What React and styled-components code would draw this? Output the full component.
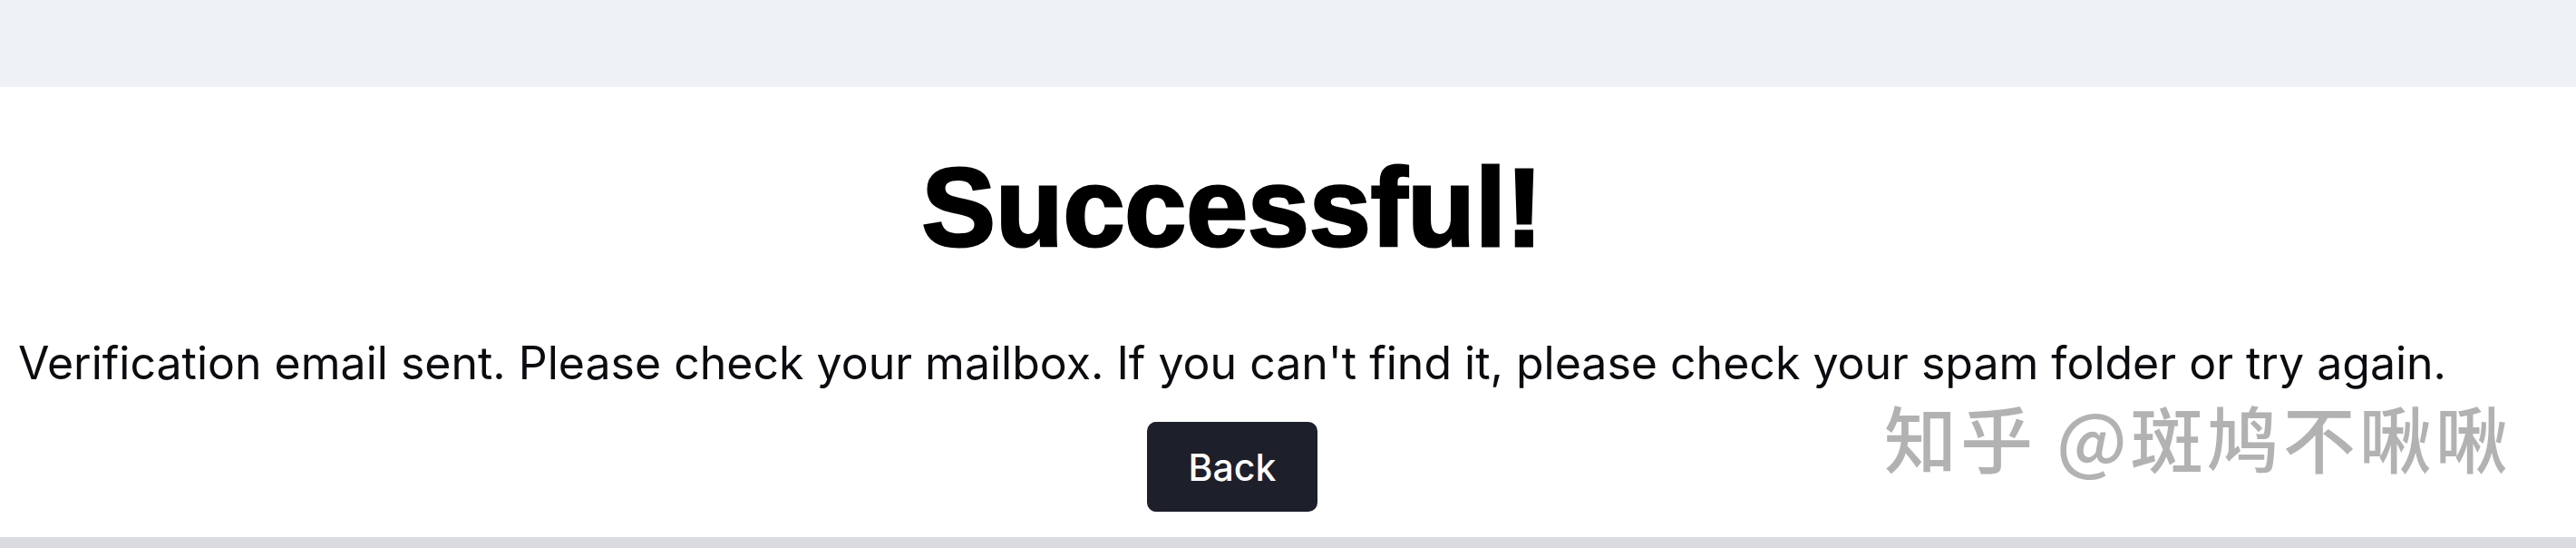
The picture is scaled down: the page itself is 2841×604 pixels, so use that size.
import React from 'react';
import styled, { createGlobalStyle } from 'styled-components';

const GlobalStyle = createGlobalStyle`
  html, body {
    margin: 0;
    padding: 0;
    background: #ffffff;
  }
  #root {
    width: 2841px;
    height: 604px;
    overflow: hidden;
  }
`;

const Page = styled.div`
  width: 100%;
  height: 604px;
  display: flex;
  flex-direction: column;
  position: relative;
`;

const TopBar = styled.div`
  height: 96px;
  background-color: #eef1f6;
  flex-shrink: 0;
`;

const Main = styled.main`
  flex: 1;
  display: flex;
  flex-direction: column;
  align-items: center;
  padding-right: 123px;
  background-color: #ffffff;
`;

const Title = styled.h1`
  margin: 72px 0 0;
  font-family: "Liberation Sans", Arial, sans-serif;
  font-weight: 700;
  font-size: 122px;
  line-height: 1;
  color: #000000;
  -webkit-text-stroke: 3px #000000;
`;

const Message = styled.p`
  margin: 85px 0 0;
  font-family: Inter, "Noto Sans", sans-serif;
  font-size: 50px;
  line-height: 1;
  color: #0b0b10;
  white-space: nowrap;
`;

const BackButton = styled.button`
  margin-top: 40px;
  width: 188px;
  height: 99px;
  border: none;
  border-radius: 10px;
  background-color: #1d202a;
  color: #ffffff;
  font-family: Inter, "Noto Sans", sans-serif;
  font-weight: 500;
  font-size: 41px;
  cursor: pointer;
`;

const BottomBar = styled.div`
  height: 12px;
  background-color: #d9dbe0;
  flex-shrink: 0;
`;

const Watermark = styled.div`
  position: absolute;
  left: 2078px;
  top: 432px;
  font-family: "Noto Sans CJK SC", sans-serif;
  font-weight: 500;
  font-size: 80px;
  letter-spacing: 4px;
  line-height: 1.2;
  color: #b2b2b2;
  white-space: nowrap;
  pointer-events: none;
`;

export default function App() {
  return (
    <>
      <GlobalStyle />
      <Page>
        <TopBar />
        <Main>
          <Title>Successful!</Title>
          <Message>
            Verification email sent. Please check your mailbox. If you can't find it, please check your spam folder or try again.
          </Message>
          <BackButton>Back</BackButton>
        </Main>
        <BottomBar />
        <Watermark>知乎 @斑鸠不啾啾</Watermark>
      </Page>
    </>
  );
}
